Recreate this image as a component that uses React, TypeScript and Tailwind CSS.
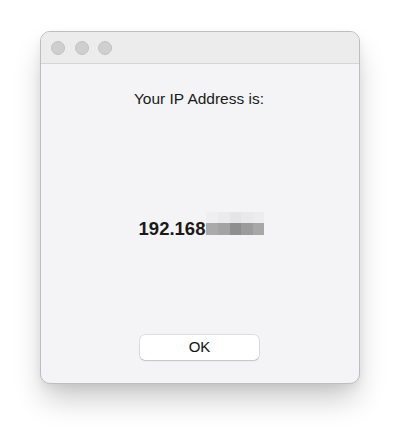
import React from "react";

const topRow = ["#efeff1", "#ebebed", "#e5e5e7", "#e9e9eb", "#ececee"];
const bottomRow = ["#aaaaaa", "#a3a3a3", "#8e8e8e", "#9b9b9b", "#a7a7a7"];

export default function App() {
  return (
    <div
      className="w-[400px] h-[433px] bg-white pl-[40px] pt-[31px]"
      style={{ fontFamily: '"Liberation Sans", Arial, sans-serif' }}
    >
      <div className="w-[320px] h-[353px] rounded-[10px] border border-[#bdbdbd] bg-[#f4f4f6] shadow-[0_18px_30px_-4px_rgba(0,0,0,0.22),0_4px_10px_rgba(0,0,0,0.06)] flex flex-col overflow-hidden">
        <div className="h-[32px] shrink-0 bg-[#ececec] border-b border-[#d6d6d6] flex items-center pl-[10px] gap-[9.5px]">
          <div className="w-[14px] h-[14px] rounded-full bg-[#cfcfcf] border border-[#c2c2c2]" />
          <div className="w-[14px] h-[14px] rounded-full bg-[#cfcfcf] border border-[#c2c2c2]" />
          <div className="w-[14px] h-[14px] rounded-full bg-[#cfcfcf] border border-[#c2c2c2]" />
        </div>
        <div className="flex-1 flex flex-col items-center">
          <div className="mt-[26px] text-[15.5px] leading-[18px] text-[#1a1a1a] pr-[2px]">
            Your IP Address is:
          </div>
          <div className="mt-[104px] flex items-end pl-[3px]">
            <span className="text-[18.5px] leading-[22px] font-bold text-[#1a1a1a]">192.168</span>
            <div className="flex flex-col ml-[1px] mb-[4.5px]">
              <div className="flex">
                {topRow.map((c, i) => (
                  <div key={i} className="w-[11.6px] h-[11px]" style={{ backgroundColor: c }} />
                ))}
              </div>
              <div className="flex">
                {bottomRow.map((c, i) => (
                  <div key={i} className="w-[11.6px] h-[12px]" style={{ backgroundColor: c }} />
                ))}
              </div>
            </div>
          </div>
          <div className="mt-auto mb-[23px] w-[119px] h-[25px] rounded-[5px] bg-white shadow-[0_0_0_0.5px_rgba(0,0,0,0.18),0_1px_1.5px_rgba(0,0,0,0.12)] flex items-center justify-center text-[15px] text-[#111] mr-[1px]">
            OK
          </div>
        </div>
      </div>
    </div>
  );
}
